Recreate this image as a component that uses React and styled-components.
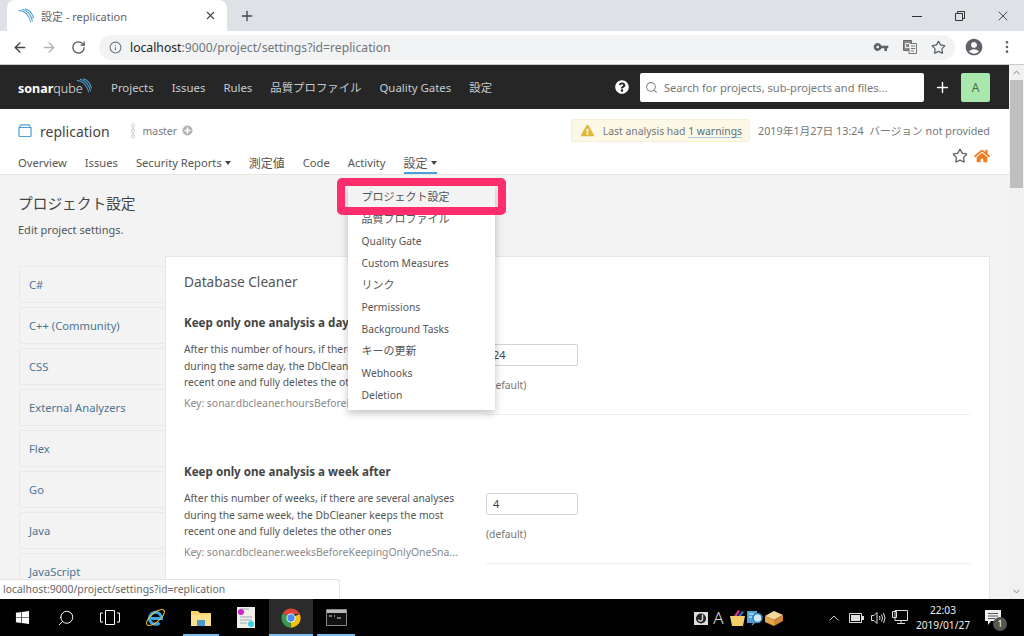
import React from 'react';
import styled, { createGlobalStyle } from 'styled-components';
import {
  ArrowLeft,
  ArrowRight,
  ChevronUp,
  Info,
  MoreVertical,
  Plus,
  RotateCw,
  Search,
  Star,
  X,
} from 'lucide-react';
import { FaExclamationTriangle, FaHome, FaQuestionCircle, FaWindows } from 'react-icons/fa';
import { MdAccountCircle, MdVpnKey } from 'react-icons/md';

const GlobalStyle = createGlobalStyle`
  html, body {
    margin: 0;
    height: 100%;
    overflow: hidden;
  }
  body {
    font-family: "Noto Sans", "Noto Sans CJK JP", sans-serif;
    font-size: 12px;
    color: #555;
  }
  * {
    box-sizing: border-box;
  }
`;

const Screen = styled.div`
  position: relative;
  display: flex;
  flex-direction: column;
  width: 1024px;
  height: 636px;
  overflow: hidden;
  background: #fff;
`;

/* browser chrome */
const TabStrip = styled.div`
  display: flex;
  align-items: stretch;
  flex: 0 0 31px;
  padding-left: 7px;
  background: #dee1e6;
`;

const Tab = styled.div`
  display: flex;
  align-items: center;
  width: 220px;
  padding: 0 10px 0 11px;
  border-radius: 8px 8px 0 0;
  background: #fff;
  font-size: 11px;
  color: #5f6368;
`;

const TabTitle = styled.span`
  flex: 1;
  margin-left: 7px;
`;

const NewTab = styled.div`
  display: flex;
  align-items: center;
  margin-left: 12px;
  color: #444;
`;

const WindowControls = styled.div`
  display: flex;
  align-items: center;
  gap: 28.5px;
  margin-left: auto;
  padding-right: 13px;
  color: #222;
`;

const Toolbar = styled.div`
  display: flex;
  align-items: center;
  flex: 0 0 34px;
  padding: 0 0 1px 12px;
  border-bottom: 1px solid #c8c9cc;
  background: #fff;
`;

const ToolButton = styled.span`
  display: flex;
  justify-content: center;
  width: 16px;
  margin-right: 13px;
  color: ${props => props.color || '#5f6368'};
`;

const AddressBar = styled.div`
  display: flex;
  align-items: center;
  width: 856px;
  height: 25px;
  padding: 0 9px 0 10px;
  border-radius: 13px;
  background: #f1f3f4;
  font-size: 12.2px;
  color: #70757a;
`;

const Url = styled.span`
  flex: 1;
  margin-left: 8px;
  b {
    font-weight: 400;
    color: #222;
  }
`;

const AddressIcons = styled.div`
  display: flex;
  align-items: center;
  gap: 14px;
  color: #5f6368;
`;

const ToolbarEnd = styled.div`
  display: flex;
  align-items: center;
  gap: 15px;
  margin-left: 9px;
  color: #5f6368;
`;

/* page + scrollbar */
const Viewport = styled.div`
  display: flex;
  flex: 1;
  min-height: 0;
`;

const Page = styled.div`
  display: flex;
  flex-direction: column;
  flex: 1;
  min-width: 0;
  overflow: hidden;
  background: #f3f3f3;
`;

const Scrollbar = styled.div`
  display: flex;
  flex-direction: column;
  align-items: center;
  flex: 0 0 15px;
  background: #f1f1f1;
  color: #777;
`;

const ScrollThumb = styled.div`
  width: 13px;
  height: 108px;
  background: #bfbfbf;
`;

const ScrollArrow = styled.span`
  display: flex;
  height: 15px;
  align-items: center;
  margin-top: ${props => (props.bottom ? 'auto' : '0')};
  transform: ${props => (props.bottom ? 'rotate(180deg)' : 'none')};
`;

/* sonarqube global nav */
const GlobalNav = styled.div`
  display: flex;
  align-items: center;
  flex: 0 0 44px;
  padding: 0 19px 0 18px;
  background: #262626;
  color: #c8ccd0;
`;

const Logo = styled.div`
  display: flex;
  align-items: flex-end;
  width: 93px;
  height: 24px;
  font-size: 12.5px;
  font-weight: 300;
  line-height: 20px;
  color: #e8e8e8;
  b {
    font-weight: 700;
    color: #fff;
  }
  svg {
    margin-left: -7px;
    margin-bottom: 5px;
  }
`;

const GlobalLink = styled.span`
  margin-right: 18px;
  font-size: 11.4px;
  white-space: nowrap;
`;

const GlobalRight = styled.div`
  display: flex;
  align-items: center;
  margin-left: auto;
  color: #fff;
`;

const SearchBox = styled.div`
  display: flex;
  align-items: center;
  width: 284px;
  height: 29px;
  margin-left: 11px;
  padding-left: 5px;
  border-radius: 2px;
  background: #fff;
  font-size: 11.1px;
  color: #777;
  svg {
    margin-right: 6px;
    color: #888;
  }
`;

const AvatarBox = styled.div`
  display: flex;
  align-items: center;
  justify-content: center;
  width: 29px;
  height: 29px;
  border-radius: 2px;
  background: #a8e8ac;
  color: #4d6a50;
`;

const PlusWrap = styled.span`
  display: flex;
  margin: 0 10px;
`;

/* project header */
const ProjectBar = styled.div`
  flex: 0 0 66px;
  padding: 10px 19px 0 18px;
  border-bottom: 1px solid #e6e6e6;
  background: #fff;
`;

const ProjectRow = styled.div`
  display: flex;
  align-items: center;
  height: 23px;
`;

const ProjectName = styled.span`
  margin: 1px 20px 0 8px;
  font-size: 14px;
  color: #444;
`;

const Branch = styled.span`
  margin: 0 5px 0 7px;
  font-size: 10.4px;
  color: #777;
`;

const ProjectMeta = styled.div`
  display: flex;
  align-items: center;
  margin-left: auto;
  font-size: 10.75px;
  color: #777;
`;

const WarningBox = styled.div`
  display: flex;
  align-items: center;
  height: 23px;
  margin-right: 8px;
  padding: 0 7px 0 9px;
  border: 1px solid #f7f0d6;
  border-radius: 2px;
  background: #fcf8e6;
  font-size: 10.4px;
  svg {
    margin-right: 9px;
    color: #dfb93f;
  }
  u {
    text-decoration-color: #a9cde5;
    text-underline-offset: 2px;
    color: #566f80;
  }
`;

const NavRow = styled.div`
  display: flex;
  align-items: flex-start;
  justify-content: space-between;
  height: 32px;
`;

const ProjectNav = styled.div`
  display: flex;
  align-items: flex-start;
  gap: 18px;
  padding-top: 13px;
`;

const NavItem = styled.span`
  position: relative;
  display: flex;
  align-items: center;
  height: 19px;
  padding-bottom: 2px;
  border-bottom: 2px solid ${props => (props.active ? '#4b9fd5' : 'transparent')};
  font-size: ${props => (props.cjk ? '12px' : '11.2px')};
  color: #555;
  white-space: nowrap;
`;

const Caret = styled.i`
  width: 0;
  height: 0;
  margin-left: 3px;
  border-style: solid;
  border-width: 4px 3.5px 0;
  border-color: #444 transparent transparent;
`;

const ProjectActions = styled.div`
  display: flex;
  align-items: center;
  gap: 6px;
  padding-top: 6px;
`;

/* dropdown */
const Menu = styled.div`
  position: absolute;
  top: 31px;
  left: -56px;
  z-index: 3;
  width: 147px;
  padding: 0 0 4px;
  background: #fff;
  box-shadow: 0 3px 8px rgba(0, 0, 0, 0.25);
`;

const MenuItem = styled.div`
  position: relative;
  z-index: ${props => (props.active ? 1 : 0)};
  height: 22px;
  padding-left: 14px;
  background: ${props => (props.active ? '#f3f3f3' : '#fff')};
  font-size: ${props => (props.cjk ? '11px' : '10.3px')};
  line-height: 22px;
  color: #555;
`;

const Callout = styled.div`
  position: absolute;
  top: -8px;
  right: -11px;
  bottom: -7px;
  left: -11px;
  border: 8px solid #ff2d6c;
  border-radius: 5px;
  pointer-events: none;
`;

/* settings page */
const Content = styled.div`
  flex: 1;
  min-height: 0;
  padding: 0 19px;
`;

const PageTitle = styled.h1`
  margin: 17px 0 0 -1px;
  font-size: 14.7px;
  font-weight: 400;
  line-height: 22px;
  color: #444;
`;

const PageDesc = styled.p`
  margin: 8px 0 18px -1px;
  font-size: 11px;
  line-height: 16px;
  color: #555;
`;

const Columns = styled.div`
  display: flex;
  align-items: flex-start;
`;

const Sidebar = styled.div`
  display: flex;
  flex-direction: column;
  flex: 0 0 146px;
  gap: 4px;
  padding-top: 10px;
`;

const SideItem = styled.div`
  height: 37px;
  padding-left: 9px;
  border: 1px solid #e9e9e9;
  border-right: 0;
  border-radius: 2px 0 0 2px;
  font-size: 11.2px;
  line-height: 35px;
  color: #4d7390;
`;

const Panel = styled.div`
  flex: 1;
  height: 420px;
  padding: 14px 18px 0;
  border: 1px solid #e6e6e6;
  background: #fff;
`;

const PanelTitle = styled.h2`
  margin: 0 0 22px;
  font-size: 13.7px;
  font-weight: 400;
  line-height: 22px;
  color: #555;
`;

const Setting = styled.div`
  display: grid;
  grid-template-columns: 302px 1fr;
  height: ${props => props.height}px;
`;

const SettingInfo = styled.div`
  padding-right: 26px;
`;

const SettingName = styled.h3`
  margin: 0 0 10px;
  font-size: 11.6px;
  font-weight: 700;
  line-height: 16px;
  color: #444;
`;

const SettingText = styled.p`
  margin: 0;
  font-size: 10.3px;
  line-height: 16.5px;
  color: #555;
`;

const SettingKey = styled.p`
  margin: 4px 0 0;
  font-size: 10.4px;
  line-height: 16px;
  color: #888;
  white-space: nowrap;
`;

const SettingValue = styled.div`
  padding-top: 29px;
  height: ${props => props.height}px;
  border-bottom: 1px solid #eee;
`;

const NumberBox = styled.div`
  width: 92px;
  height: 22px;
  padding-left: 6px;
  border: 1px solid #cfd3d7;
  border-radius: 2px;
  font-size: 11px;
  line-height: 20px;
  color: #444;
`;

const DefaultNote = styled.div`
  margin-top: 11px;
  font-size: 10.3px;
  line-height: 16px;
  color: #777;
`;

/* status bubble */
const StatusBubble = styled.div`
  position: absolute;
  left: 0;
  bottom: 37px;
  z-index: 2;
  width: 340px;
  height: 20px;
  padding-left: 3px;
  border: 1px solid #e4e4e4;
  border-width: 1px 1px 0 0;
  border-radius: 0 3px 0 0;
  background: #fff;
  font-size: 10.4px;
  line-height: 19px;
  color: #666;
`;

/* taskbar */
const Taskbar = styled.div`
  display: flex;
  align-items: stretch;
  flex: 0 0 37px;
  background: #020203;
  color: #fff;
`;

const TaskSlot = styled.div`
  position: relative;
  display: flex;
  align-items: center;
  justify-content: center;
  width: ${props => props.width || 44}px;
  background: ${props => (props.active ? '#2b2b2b' : 'transparent')};
  &::after {
    content: '';
    position: absolute;
    left: ${props => (props.active ? 0 : '4px')};
    right: ${props => (props.active ? 0 : '4px')};
    bottom: 0;
    height: 2px;
    background: ${props => (props.running ? '#7cbcec' : 'transparent')};
  }
`;

const Tray = styled.div`
  display: flex;
  align-items: center;
  margin-left: auto;
`;

const TrayApps = styled.div`
  display: flex;
  align-items: center;
  gap: 1px;
  margin-right: 40px;
`;

const TrayLetter = styled.span`
  width: 19px;
  font-size: 17px;
  font-weight: 300;
  text-align: center;
  color: #ddd;
`;

const TrayIcon = styled.span`
  display: flex;
  align-items: center;
  justify-content: center;
  width: 22px;
  color: #ddd;
`;

const Clock = styled.div`
  width: 62px;
  margin-left: 1px;
  font-size: 10.2px;
  line-height: 15px;
  text-align: center;
  color: #eee;
`;

const NotifyWrap = styled.div`
  position: relative;
  display: flex;
  justify-content: center;
  width: 50px;
  padding-right: 12px;
`;

const NotifyBadge = styled.span`
  position: absolute;
  top: 7px;
  left: 19px;
  width: 14px;
  height: 14px;
  border-radius: 50%;
  background: #555;
  font-size: 9px;
  line-height: 14px;
  text-align: center;
  color: #fff;
`;

const WaveIcon = ({ size, color }) => (
  <svg width={size} height={size} viewBox="0 0 20 20" fill="none" stroke={color} strokeWidth="1.3">
    <path d="M1 3c7 0 13 6 15 15" />
    <path d="M5 1.500c6 1 12 7 13 15" />
    <path d="M9 1c5 1.500 9 6 10.500 12" />
  </svg>
);

const IeIcon = () => (
  <svg width="23" height="23" viewBox="0 0 23 23" fill="none">
    <path d="M6 12.500h11.500a6 6 0 1 0-2 4.300" stroke="#37a9e8" strokeWidth="3" />
    <ellipse cx="11.500" cy="11.500" rx="11" ry="4.500" transform="rotate(-40 11.500 11.500)" stroke="#f2c230" />
  </svg>
);

const FolderIcon = () => (
  <svg width="20" height="18" viewBox="0 0 20 18">
    <path d="M0 2h7l2 2h11v13H0z" fill="#f4d16b" />
    <path d="M0 6h20v11H0z" fill="#f8e08e" />
    <path d="M6 11h8v6H6z" fill="#4a9ccf" />
  </svg>
);

const NotepadIcon = () => (
  <svg width="18" height="21" viewBox="0 0 18 21">
    <path d="M0 0h18v21H0z" fill="#f0f0e8" />
    <path d="M3 2h9M3 10h12M3 13h12M3 16h7" stroke="#9ab" strokeWidth="1" />
    <circle cx="4" cy="5" r="3" fill="#d61fc8" />
    <circle cx="14" cy="17" r="3" fill="#35d4de" />
  </svg>
);

const ChromeIcon = () => (
  <svg width="22" height="22" viewBox="0 0 48 48">
    <path d="M24 24 6 13.600A21 21 0 0 1 43 15H24z" fill="#db4437" />
    <path d="M24 24 43 15a21 21 0 0 1-20 30z" fill="#f4c20d" />
    <path d="M24 24 23 45A21 21 0 0 1 6 13.600z" fill="#3a9a4e" />
    <circle cx="24" cy="24" r="10" fill="#fff" />
    <circle cx="24" cy="24" r="8" fill="#4c8bf5" />
  </svg>
);

const TerminalIcon = () => (
  <svg width="21" height="17" viewBox="0 0 21 17">
    <path d="M.5.5h20v16H.5z" fill="#111" stroke="#888" />
    <path d="M1 1h19v3H1z" fill="#bbb" />
    <path d="M3 7h3M8 7h1M11 9h4" stroke="#ddd" />
  </svg>
);

const TranslateIcon = () => (
  <svg width="14" height="14" viewBox="0 0 14 14">
    <path d="M.5.500h8v10h-8z" fill="#888" stroke="#666" />
    <path d="M6 3.500h7.500v10H6z" fill="#f1f3f4" stroke="#777" />
    <path d="M8 6h4M8 8.500h4M8 11h3" stroke="#777" />
    <path d="M2.500 3.500h4v4h-4z" fill="none" stroke="#eee" />
  </svg>
);

const ProjectIcon = () => (
  <svg width="14" height="13" viewBox="0 0 14 13" fill="none" stroke="#4b9fd5" strokeWidth="1.2">
    <path d="M1 3.500h12v8a1 1 0 0 1-1 1H2a1 1 0 0 1-1-1z" />
    <path d="M1.500 3 3 .8h8L12.500 3" />
  </svg>
);

const BranchIcon = () => (
  <svg width="6" height="16" viewBox="0 0 6 16" fill="none" stroke="#ccc">
    <circle cx="3" cy="2.500" r="1.600" />
    <path d="M3 4v2.500" />
    <circle cx="3" cy="8" r="1.600" />
    <path d="M3 9.500V12" />
    <circle cx="3" cy="13.500" r="1.600" />
  </svg>
);

const PlusCircle = () => (
  <svg width="11" height="11" viewBox="0 0 11 11">
    <circle cx="5.500" cy="5.500" r="5" fill="#b4b4b4" />
    <path d="M2.500 5.500h6M5.500 2.500v6" stroke="#fff" strokeWidth="1.600" />
  </svg>
);

const TaskViewIcon = () => (
  <svg width="20" height="15" viewBox="0 0 20 15" fill="none" stroke="#fff">
    <path d="M5.500.5h9v14h-9zM3 3H.5v9H3M17 3h2.500v9H17" />
  </svg>
);

const ActionCenterIcon = () => (
  <svg width="16" height="15" viewBox="0 0 16 15">
    <path d="M0 0h16v11H6l-3 4v-4H0z" fill="#eee" />
    <path d="M3 3.500h10M3 6h10M3 8.500h7" stroke="#555" />
  </svg>
);

const VolumeIcon = () => (
  <svg width="15" height="14" viewBox="0 0 15 14" fill="none" stroke="#ddd">
    <path d="M.5 4.500h2.500l3-3v11l-3-3H.5zM8.500 5q1 2 0 4M10.500 3.500q2 3.500 0 7M12.500 2q3 5 0 10" />
  </svg>
);

const BatteryIcon = () => (
  <svg width="15" height="10" viewBox="0 0 15 10">
    <path d="M.5.500h12v9H.5z" fill="none" stroke="#ddd" />
    <path d="M2 2h9v6H2zM13 3h2v4h-2z" fill="#ddd" />
  </svg>
);

const NetworkIcon = () => (
  <svg width="16" height="15" viewBox="0 0 16 15" fill="none" stroke="#ddd">
    <path d="M3 .500h12.500v10H3zM9 10.500v3M5 13.500h8M.5 1.500h4v6h-4z" />
  </svg>
);

const TrayBadgeIcon = () => (
  <svg width="14" height="14" viewBox="0 0 14 14">
    <path d="M0 1h14v13H0z" fill="#ddd" />
    <circle cx="7" cy="7.500" r="5" fill="#222" />
    <path d="M8.500 3.500v4a2 2 0 0 1-4 1" fill="none" stroke="#ddd" strokeWidth="1.400" />
  </svg>
);

const TrayBasketIcon = () => (
  <svg width="17" height="16" viewBox="0 0 17 16">
    <path d="M1 6h15l-2 10H3z" fill="#f2cd6a" />
    <path d="M5 6 9 0l2 1-3 5z" fill="#d8327c" />
    <path d="M9 6l4-5 2 1-3 4z" fill="#2f6fd0" />
  </svg>
);

const TrayFinderIcon = () => (
  <svg width="17" height="16" viewBox="0 0 17 16">
    <path d="M0 1h10v12H0z" fill="#4f9fd8" />
    <path d="M2 4h5M2 7h3" stroke="#dff" />
    <circle cx="10.500" cy="8" r="4.500" fill="#cfe8f5" stroke="#2f7fb8" strokeWidth="1.500" />
    <path d="M8 12l-3 3" stroke="#7a8a94" strokeWidth="1.500" />
  </svg>
);

const TrayBoxIcon = () => (
  <svg width="18" height="16" viewBox="0 0 18 16">
    <path d="M0 6l9-5 9 4-9 5z" fill="#f6d79c" />
    <path d="M0 6l9 4v6l-9-4z" fill="#e8a64c" />
    <path d="M9 10l9-5v6l-9 5z" fill="#d28a34" />
  </svg>
);

const globalLinks = ['Projects', 'Issues', 'Rules', '品質プロファイル', 'Quality Gates', '設定'];

const menuItems = [
  { label: '品質プロファイル', cjk: true },
  { label: 'Quality Gate' },
  { label: 'Custom Measures' },
  { label: 'リンク', cjk: true },
  { label: 'Permissions' },
  { label: 'Background Tasks' },
  { label: 'キーの更新', cjk: true },
  { label: 'Webhooks' },
  { label: 'Deletion' },
];

const languages = ['C#', 'C++ (Community)', 'CSS', 'External Analyzers', 'Flex', 'Go', 'Java', 'JavaScript'];

const settings = [
  {
    name: 'Keep only one analysis a day after',
    text: 'After this number of hours, if there are several analyses during the same day, the DbCleaner keeps the most recent one and fully deletes the other ones',
    keyName: 'Key: sonar.dbcleaner.hoursBeforeKeepingOnlyOneSna...',
    value: '24',
  },
  {
    name: 'Keep only one analysis a week after',
    text: 'After this number of weeks, if there are several analyses during the same week, the DbCleaner keeps the most recent one and fully deletes the other ones',
    keyName: 'Key: sonar.dbcleaner.weeksBeforeKeepingOnlyOneSna...',
    value: '4',
  },
];

export default function App() {
  return (
    <Screen>
      <GlobalStyle />
      <TabStrip>
        <Tab>
          <WaveIcon size={16} color="#4b9fd5" />
          <TabTitle>設定 - replication</TabTitle>
          <X size={13} color="#444" />
        </Tab>
        <NewTab>
          <Plus size={16} />
        </NewTab>
        <WindowControls>
          <svg width="14" height="14" viewBox="0 0 14 14" stroke="#333">
            <path d="M2 7.500h10" />
          </svg>
          <svg width="14" height="14" viewBox="0 0 14 14" fill="none" stroke="#333">
            <path d="M2.500 4.500h7v7h-7zM4.500 4.500v-2h7v7h-2" />
          </svg>
          <X size={16} strokeWidth={1.2} />
        </WindowControls>
      </TabStrip>

      <Toolbar>
        <ToolButton color="#444">
          <ArrowLeft size={17} />
        </ToolButton>
        <ToolButton color="#b0b3b7">
          <ArrowRight size={17} />
        </ToolButton>
        <ToolButton color="#555">
          <RotateCw size={15} />
        </ToolButton>
        <AddressBar>
          <Info size={13} />
          <Url>
            <b>localhost</b>:9000/project/settings?id=replication
          </Url>
          <AddressIcons>
            <MdVpnKey size={16} />
            <TranslateIcon />
            <Star size={15} />
          </AddressIcons>
        </AddressBar>
        <ToolbarEnd>
          <MdAccountCircle size={20} />
          <MoreVertical size={16} />
        </ToolbarEnd>
      </Toolbar>

      <Viewport>
        <Page>
          <GlobalNav>
            <Logo>
              <span>
                <b>sonar</b>qube
              </span>
              <WaveIcon size={16} color="#4b9fd5" />
            </Logo>
            {globalLinks.map(link => (
              <GlobalLink key={link}>{link}</GlobalLink>
            ))}
            <GlobalRight>
              <FaQuestionCircle size={14} />
              <SearchBox>
                <Search size={13} />
                Search for projects, sub-projects and files...
              </SearchBox>
              <PlusWrap>
                <Plus size={17} />
              </PlusWrap>
              <AvatarBox>A</AvatarBox>
            </GlobalRight>
          </GlobalNav>

          <ProjectBar>
            <ProjectRow>
              <ProjectIcon />
              <ProjectName>replication</ProjectName>
              <BranchIcon />
              <Branch>master</Branch>
              <PlusCircle />
              <ProjectMeta>
                <WarningBox>
                  <FaExclamationTriangle size={13} />
                  <span>
                    Last analysis had <u>1 warnings</u>
                  </span>
                </WarningBox>
                2019年1月27日 13:24&nbsp;&nbsp;バージョン not provided
              </ProjectMeta>
            </ProjectRow>
            <NavRow>
              <ProjectNav>
                <NavItem>Overview</NavItem>
                <NavItem>Issues</NavItem>
                <NavItem>
                  Security Reports
                  <Caret />
                </NavItem>
                <NavItem cjk>測定値</NavItem>
                <NavItem>Code</NavItem>
                <NavItem>Activity</NavItem>
                <NavItem active cjk>
                  設定
                  <Caret />
                  <Menu>
                    <MenuItem active cjk>
                      プロジェクト設定
                      <Callout />
                    </MenuItem>
                    {menuItems.map(item => (
                      <MenuItem key={item.label} cjk={item.cjk}>
                        {item.label}
                      </MenuItem>
                    ))}
                  </Menu>
                </NavItem>
              </ProjectNav>
              <ProjectActions>
                <Star size={16} color="#666" />
                <FaHome size={16} color="#ed7d20" />
              </ProjectActions>
            </NavRow>
          </ProjectBar>

          <Content>
            <PageTitle>プロジェクト設定</PageTitle>
            <PageDesc>Edit project settings.</PageDesc>
            <Columns>
              <Sidebar>
                {languages.map(lang => (
                  <SideItem key={lang}>{lang}</SideItem>
                ))}
              </Sidebar>
              <Panel>
                <PanelTitle>Database Cleaner</PanelTitle>
                {settings.map(setting => (
                  <Setting key={setting.value} height={149}>
                    <SettingInfo>
                      <SettingName>{setting.name}</SettingName>
                      <SettingText>{setting.text}</SettingText>
                      <SettingKey>{setting.keyName}</SettingKey>
                    </SettingInfo>
                    <SettingValue height={100}>
                      <NumberBox>{setting.value}</NumberBox>
                      <DefaultNote>(default)</DefaultNote>
                    </SettingValue>
                  </Setting>
                ))}
              </Panel>
            </Columns>
          </Content>
        </Page>
        <Scrollbar>
          <ScrollArrow>
            <ChevronUp size={11} />
          </ScrollArrow>
          <ScrollThumb />
          <ScrollArrow bottom>
            <ChevronUp size={11} />
          </ScrollArrow>
        </Scrollbar>
      </Viewport>

      <StatusBubble>localhost:9000/project/settings?id=replication</StatusBubble>

      <Taskbar>
        <TaskSlot>
          <FaWindows size={15} />
        </TaskSlot>
        <TaskSlot>
          <Search size={18} strokeWidth={1.3} style={{ transform: 'scaleX(-1)' }} />
        </TaskSlot>
        <TaskSlot>
          <TaskViewIcon />
        </TaskSlot>
        <TaskSlot width={47}>
          <IeIcon />
        </TaskSlot>
        <TaskSlot running>
          <FolderIcon />
        </TaskSlot>
        <TaskSlot width={46}>
          <NotepadIcon />
        </TaskSlot>
        <TaskSlot active running>
          <ChromeIcon />
        </TaskSlot>
        <TaskSlot running width={46}>
          <TerminalIcon />
        </TaskSlot>
        <Tray>
          <TrayApps>
            <TrayBadgeIcon />
            <TrayLetter>A</TrayLetter>
            <TrayBasketIcon />
            <TrayFinderIcon />
            <TrayBoxIcon />
          </TrayApps>
          <TrayIcon>
            <ChevronUp size={16} strokeWidth={1.4} />
          </TrayIcon>
          <TrayIcon>
            <BatteryIcon />
          </TrayIcon>
          <TrayIcon>
            <VolumeIcon />
          </TrayIcon>
          <TrayIcon>
            <NetworkIcon />
          </TrayIcon>
          <Clock>
            22:03
            <br />
            2019/01/27
          </Clock>
          <NotifyWrap>
            <ActionCenterIcon />
            <NotifyBadge>1</NotifyBadge>
          </NotifyWrap>
        </Tray>
      </Taskbar>
    </Screen>
  );
}
